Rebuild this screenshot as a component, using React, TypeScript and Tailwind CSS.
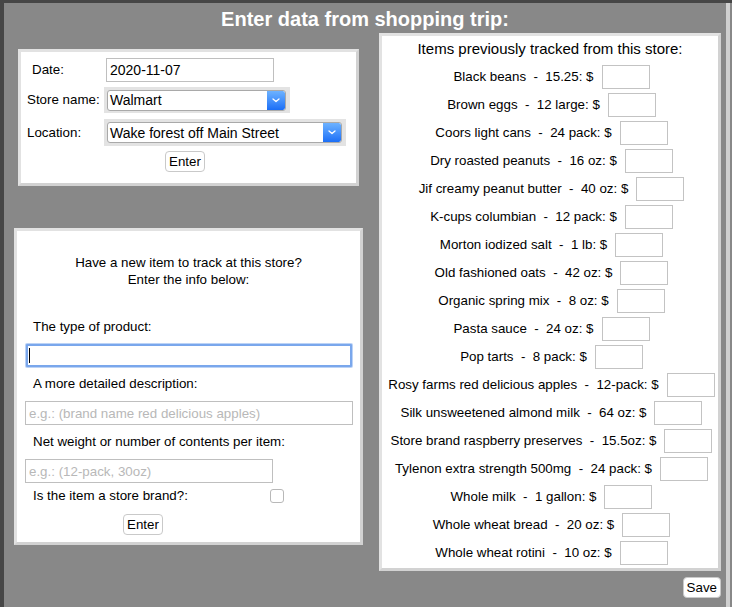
import React from "react";

const items: [string, string][] = [
  ["Black beans", "15.25"],
  ["Brown eggs", "12 large"],
  ["Coors light cans", "24 pack"],
  ["Dry roasted peanuts", "16 oz"],
  ["Jif creamy peanut butter", "40 oz"],
  ["K-cups columbian", "12 pack"],
  ["Morton iodized salt", "1 lb"],
  ["Old fashioned oats", "42 oz"],
  ["Organic spring mix", "8 oz"],
  ["Pasta sauce", "24 oz"],
  ["Pop tarts", "8 pack"],
  ["Rosy farms red delicious apples", "12-pack"],
  ["Silk unsweetened almond milk", "64 oz"],
  ["Store brand raspberry preserves", "15.5oz"],
  ["Tylenon extra strength 500mg", "24 pack"],
  ["Whole milk", "1 gallon"],
  ["Whole wheat bread", "20 oz"],
  ["Whole wheat rotini", "10 oz"],
];

function Chevron() {
  return (
    <svg width="8" height="5" viewBox="0 0 8 5" fill="none">
      <path d="M1 1l3 2.6L7 1" stroke="white" strokeWidth="1.3" strokeLinecap="round" strokeLinejoin="round" />
    </svg>
  );
}

function FakeSelect({ value, width, height }: { value: string; width: string; height: string }) {
  return (
    <div className={`${width} ${height} bg-[#e3e3e3] flex items-center pl-[3px] pr-[4px]`}>
      <div className="flex-1 h-[21px] bg-white border border-[#a9a9a9] rounded-[3px] flex items-center overflow-hidden">
        <span className="flex-1 pl-[2px] text-[14px] leading-none">{value}</span>
        <span className="w-[18px] h-full bg-gradient-to-b from-[#6db2ff] to-[#1b6ef6] flex items-center justify-center rounded-r-[2px]">
          <Chevron />
        </span>
      </div>
    </div>
  );
}

function Btn({ label, className = "" }: { label: string; className?: string }) {
  return (
    <button
      className={`h-[21px] px-[3px] bg-white border border-[#c9c9c9] rounded-[4px] text-[13.33px] leading-none text-black ${className}`}
    >
      {label}
    </button>
  );
}

const box = "bg-white border-[3px] border-t-[#e2e2e2] border-l-[#e2e2e2] border-b-[#d2d2d2] border-r-[#d2d2d2]";

export default function App() {
  return (
    <div className="w-[732px] h-[607px] bg-[#888888] border-l-4 border-t-[3px] border-[#464646] font-['Liberation_Sans',Arial,sans-serif] text-[13.33px] text-black overflow-hidden flex">
      <div className="w-[722px] flex flex-col">
        <div className="pt-[5px] h-[28px] text-center text-white font-bold text-[20px] leading-[23px]">
          Enter data from shopping trip:
        </div>
        <div className="flex items-start">
          {/* left column */}
          <div className="w-[359px] flex flex-col">
            <div className={`${box} mt-[18px] ml-[14px] w-[341px] h-[137px] flex flex-col`}>
              <div className="mt-[6px] flex items-center h-[24px]">
                <div className="w-[85px] pl-[11px]">Date:</div>
                <input
                  readOnly
                  value="2020-11-07"
                  className="w-[168px] h-[24px] border border-[#bfbfbf] bg-white px-[3px] text-[14px] outline-none"
                />
              </div>
              <div className="mt-[5px] flex items-center h-[26px]">
                <div className="w-[83px] pl-[6px]">Store name:</div>
                <FakeSelect value="Walmart" width="w-[186px]" height="h-[26px]" />
              </div>
              <div className="mt-[6px] flex items-center h-[27px]">
                <div className="w-[83px] pl-[6px]">Location:</div>
                <FakeSelect value="Wake forest off Main Street" width="w-[242px]" height="h-[27px]" />
              </div>
              <div className="mt-[5px] flex">
                <Btn label="Enter" className="ml-[144px]" />
              </div>
            </div>

            <div className={`${box} mt-[42px] ml-[10px] w-[349px] h-[317px] flex flex-col`}>
              <div className="pt-[23px] text-center leading-[17px]">
                <div>Have a new item to track at this store?</div>
                <div>Enter the info below:</div>
              </div>
              <div className="mt-[30px] pl-[16px] leading-[17px]">The type of product:</div>
              <div className="mt-[9px] ml-[9px] relative w-[326px] h-[23px]">
                <input
                  readOnly
                  className="w-[326px] h-[23px] border-2 border-[#7aa7ec] shadow-[0_0_0_1px_#bcd3f6] bg-white outline-none rounded-[1px]"
                />
                <span className="absolute left-[3px] top-[4px] w-px h-[15px] bg-black" />
              </div>
              <div className="mt-[8px] pl-[16px] leading-[17px]">A more detailed description:</div>
              <input
                readOnly
                placeholder="e.g.: (brand name red delicious apples)"
                className="mt-[9px] ml-[8px] w-[328px] h-[24px] border border-[#bfbfbf] bg-white px-[3px] text-[13.33px] outline-none placeholder:text-[#b8b8b8]"
              />
              <div className="mt-[8px] pl-[16px] leading-[17px]">Net weight or number of contents per item:</div>
              <input
                readOnly
                placeholder="e.g.: (12-pack, 30oz)"
                className="mt-[9px] ml-[8px] w-[248px] h-[24px] border border-[#bfbfbf] bg-white px-[3px] text-[13.33px] outline-none placeholder:text-[#b8b8b8]"
              />
              <div className="mt-[4px] pl-[16px] flex items-center h-[17px]">
                <span className="w-[237px]">Is the item a store brand?:</span>
                <span className="w-[14px] h-[14px] border border-[#b8b8b8] rounded-[3px] bg-white" />
              </div>
              <div className="mt-[10px] flex">
                <Btn label="Enter" className="ml-[106px]" />
              </div>
            </div>
          </div>

          {/* right column */}
          <div className="ml-[16px] mt-[2px] w-[342px] flex flex-col">
            <div className={`${box} w-[342px] h-[538px] flex flex-col items-center`}>
              <div className="pt-[4px] text-[15px] leading-[17px] text-center">
                Items previously tracked from this store:
              </div>
              <div className="mt-[6px] flex flex-col w-full">
                {items.map(([name, size]) => (
                  <div key={name} className="h-[28px] flex items-center justify-center pl-[3px] gap-[8px]">
                    <span className="whitespace-pre">{`${name}  -  ${size}: $`}</span>
                    <input
                      readOnly
                      className="w-[48px] h-[24px] border border-[#c3c3c3] bg-white outline-none"
                    />
                  </div>
                ))}
              </div>
            </div>
            <div className="mt-[6px] flex justify-end">
              <Btn label="Save" />
            </div>
          </div>
        </div>
      </div>
      <div className="w-[4px] h-full bg-[#cfcfcf]" />
    </div>
  );
}
